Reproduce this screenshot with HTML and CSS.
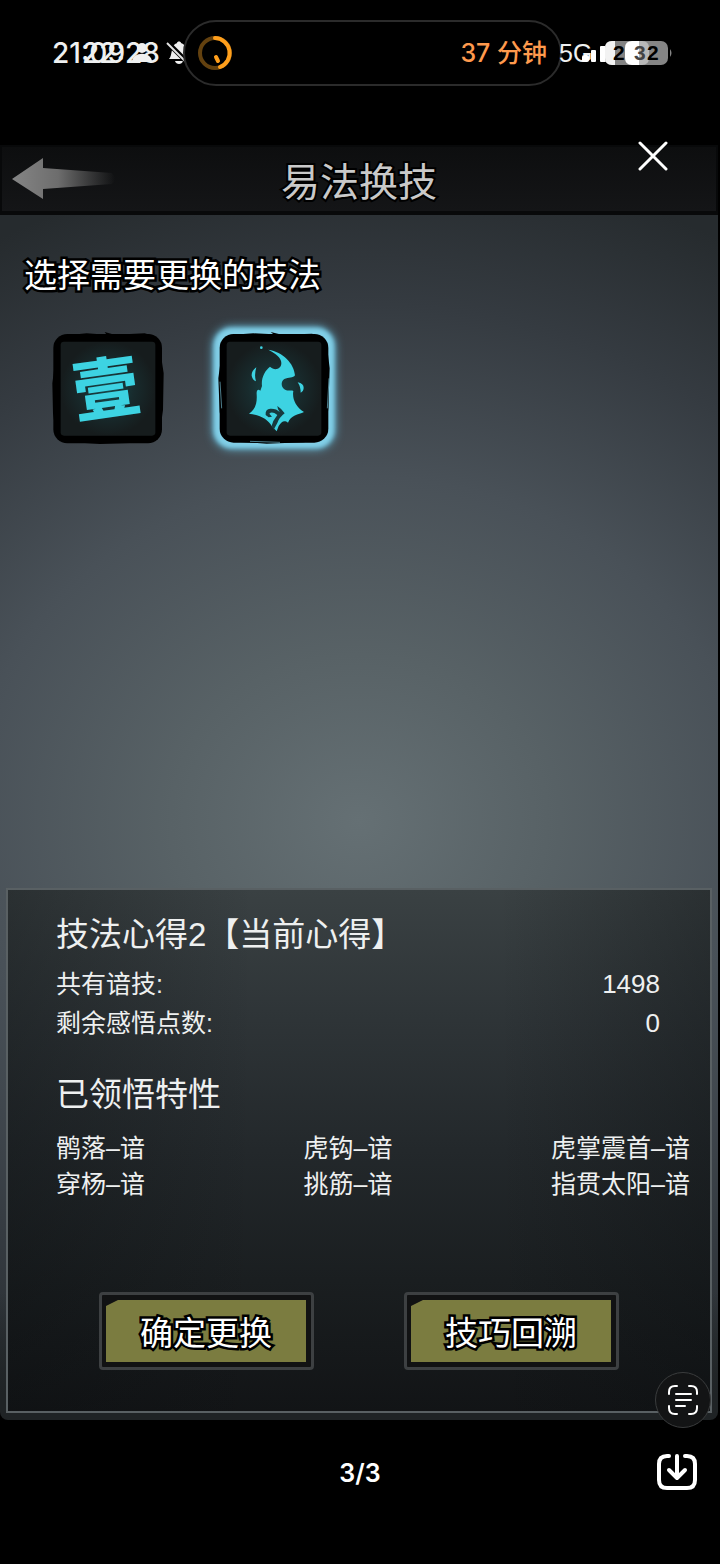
FILE: index.html
```html
<!DOCTYPE html>
<html lang="zh-CN">
<head>
<meta charset="utf-8">
<meta name="viewport" content="width=device-width, initial-scale=1">
<title>易法换技</title>
<link rel="stylesheet" href="styles.css">
</head>
<body>
<header class="status">
  <div class="clocks">
    <div class="clock"><span>21:09</span>
      <svg width="22" height="22" viewBox="0 0 22 22" aria-hidden="true"><circle cx="11" cy="6" r="5"/><path d="M1 20c0-11 20-11 20 0z"/></svg>
    </div>
    <div class="clock clock-over"><span>22:28</span>
      <svg width="22" height="26" viewBox="0 0 22 26" aria-hidden="true"><path d="M3 19c2-2 2-5 3-9 1-5 3-6 5-7 0-2 4-2 4 0 3 1 5 3 5 8 0 4 1 6 2 8z"/><path d="M9 21h8c-1 4-7 4-8 0z"/><path d="M1 2l20 20" stroke="#000" stroke-width="5"/><path d="M1 3l20 20" stroke="#e4e4e4" stroke-width="2"/></svg>
    </div>
  </div>
  <div class="island">
    <svg width="36" height="36" viewBox="0 0 36 36" fill="none" stroke-width="4" aria-hidden="true"><circle cx="18" cy="18" r="15" stroke="#63410f"/><path d="M18 3a15 15 0 0 1 5 29" stroke="#ff9f1c" stroke-linecap="round"/><path d="M19 22l2 4" stroke="#ff9f1c" stroke-width="4" stroke-linecap="round"/></svg>
    <span>37 分钟</span>
  </div>
  <div class="signal">
    <span>5G</span>
    <svg class="battery" width="92" height="26" viewBox="0 0 92 26" aria-hidden="true">
      <rect x="2" y="15" width="7" height="7" rx="2" fill="#fff"/><rect x="11" y="10" width="5" height="12" rx="1" fill="#fff"/><rect x="20" y="6" width="6" height="16" rx="1" fill="#fff"/>
      <rect x="25" y="1" width="44" height="24" rx="7" fill="#828282"/><path d="M35 1h-3q-7 0-7 7v10q0 7 7 7h3z" fill="#f2f2f2"/>
      <rect x="45" y="1" width="43" height="24" rx="7" fill="#858585"/><path d="M58 1h4q7 0 7 7v10q0 7-7 7h-4z" fill="#b8b8b8"/><path d="M59 1h-7q-7 0-7 7v10q0 7 7 7h7z" fill="#fff"/>
      <path d="M90 9q3 4 0 8z" fill="#858585"/>
      <text x="33" y="20">2</text><text x="54" y="20" fill="#444">3</text><text x="67" y="20">2</text>
    </svg>
  </div>
</header>

<main class="screen">
  <div class="titlebar">
    <button class="plain back" aria-label="返回">
      <svg width="106" height="44" viewBox="0 0 106 44"><defs><linearGradient id="fade"><stop offset="0" stop-color="#858585"/><stop offset=".45" stop-color="#6d6d6d"/><stop offset="1" stop-color="#666" stop-opacity="0"/></linearGradient></defs><path d="M0 22L31 1v10l69 5q6 6 0 11l-69 5v10z" fill="url(#fade)"/></svg>
    </button>
    <h1>易法换技</h1>
    <button class="plain close" aria-label="关闭">
      <svg width="30" height="30" viewBox="0 0 30 30" fill="none" stroke="#fff" stroke-width="3" stroke-linecap="round"><path d="M2 2l26 26M28 2L2 28"/></svg>
    </button>
  </div>

  <section class="choose">
    <h2 class="outlined">选择需要更换的技法</h2>
    <div class="skills">
      <button class="plain skill" aria-label="技法心得1">
        <svg width="112" height="112" viewBox="36 36 336 336">
          <defs><radialGradient id="teal"><stop offset="0" stop-color="#17484b"/><stop offset=".55" stop-color="#182b2d"/><stop offset="1" stop-color="#161c1d"/></radialGradient></defs>
          <rect x="40" y="42" width="326" height="328" rx="42"/>
          <path d="M80 46l60-6 60 4-6-8 30 8 90-4 20 6zM362 100l9 60-2 110-7 50zM46 120l-9 70 2 90 7 50zM90 366l90 6 110-4 30-4z"/>
          <rect x="62" y="65" width="284" height="282" rx="10" fill="url(#teal)"/>
          <text class="glyph" text-anchor="middle" x="198" y="280" transform="rotate(-8 198 204)">壹</text>
        </svg>
      </button>
      <button class="plain skill selected" aria-label="技法心得2" aria-pressed="true">
        <svg width="112" height="112" viewBox="54 51 336 336">
          <rect x="59" y="57" width="326" height="326" rx="42"/>
          <path d="M90 60l70-5 60 3-8-7 34 8 90-3 20 6zM383 110l6 50-4 120-5 50zM63 130l-8 60 4 100 6 40zM110 380l90 6 110-4 30-4z"/>
          <path d="M387 190l-5 90M60 200l5 80M150 379l90 3" fill="none" stroke="#72bcd2" stroke-width="2"/>
          <rect x="80" y="80" width="284" height="282" rx="10" fill="url(#teal)"/>
          <g fill="#3dd3e2">
            <path d="M205 104C249 111 282 145 285 181C280 190 265 187 253 192C240 201 244 221 257 225C266 229 274 224 280 228C276 249 286 276 312 291C295 299 272 301 264 323C252 314 245 320 236 333L230 349L215 333C205 313 178 299 147 296C164 283 172 269 170 238C169 225 174 221 181 227L186 213C183 190 194 167 210 155C226 171 249 159 243 138C238 121 218 112 205 104Z"/>
            <path d="M169 157q-15 11-14 25 2 12 13 17-6-18 1-42M293 202q18 4 18 16 0 10-9 15 0-18-9-31"/><circle cx="184" cy="98" r="4"/>
          </g>
          <path d="M197 300q-2-18 14-19 18-1 28 10-7-10-7-18 14 9 22 22-17 13-22 29l-11 20-6-12 5-14 12-18q-16-12-24-4l8 9-10 2z" fill="#173b3f"/>
        </svg>
      </button>
    </div>
  </section>

  <section class="panel">
    <h2>技法心得2【当前心得】</h2>
    <dl class="stats">
      <div><dt>共有谙技:</dt><dd>1498</dd></div>
      <div><dt>剩余感悟点数:</dt><dd>0</dd></div>
    </dl>
    <h2>已领悟特性</h2>
    <ul class="traits">
      <li>鹘落–谙</li><li>虎钩–谙</li><li>虎掌震首–谙</li>
      <li>穿杨–谙</li><li>挑筋–谙</li><li>指贯太阳–谙</li>
    </ul>
    <div class="actions">
      <button class="action"><span class="outlined">确定更换</span></button>
      <button class="action"><span class="outlined">技巧回溯</span></button>
    </div>
  </section>
  <button class="plain scan" aria-label="识别文字">
    <svg width="32" height="32" viewBox="0 0 32 32" fill="none" stroke="#fff" stroke-width="2" stroke-linecap="round"><path d="M2 10V8q0-6 6-6h2M22 2h2q6 0 6 6v2M30 22v2q0 6-6 6h-2M10 30H8q-6 0-6-6v-2M9 10h15M9 16h15M9 22h9"/></svg>
  </button>
</main>

<footer class="viewer">
  <span class="count">3/3</span>
  <button class="plain save" aria-label="保存">
    <svg width="42" height="38" viewBox="0 0 42 38" fill="none" stroke="#fff" stroke-width="4" stroke-linecap="round" stroke-linejoin="round"><path d="M13 3h-2q-8 0-8 8v16q0 8 8 8h20q8 0 8-8V11q0-8-8-8h-2M21 3v21M13 17l8 8 8-8"/></svg>
  </button>
</footer>
</body>
</html>
```
FILE: styles.css
```css
* { box-sizing: border-box; }

body {
  margin: 0;
  min-height: 100vh;
  display: flex;
  flex-direction: column;
  background: #000;
  color: #eef0f0;
  font-family: "Liberation Sans", "Noto Sans CJK SC", sans-serif;
}

h1, h2, dl, dd, ul { margin: 0; padding: 0; font-weight: 400; }

.plain {
  padding: 0;
  border: 0;
  background: none;
  color: inherit;
  cursor: pointer;
}

svg { display: block; }

/* Status bar */
.status {
  height: 145px;
  padding: 20px 50px 0 52px;
  display: flex;
  align-items: flex-start;
}

.clocks, .signal {
  height: 66px;
  display: flex;
  align-items: center;
}

.clocks { width: 131px; position: relative; flex: none; font: 500 28px/32px Inter, sans-serif; }
.clock { display: flex; align-items: center; gap: 6px; fill: #f0f0f0; }
.clock-over { position: absolute; left: 30px; }
.clock svg { flex: none; }

.island {
  flex: 1;
  height: 66px;
  padding: 0 13px 0 12px;
  display: flex;
  align-items: center;
  justify-content: space-between;
  position: relative;
  background: #000;
  border: 2px solid #2b2b2b;
  border-radius: 33px;
  color: #ff9a4d;
  font: 500 25px/32px Inter, "Noto Sans CJK SC", sans-serif;
}

.signal { width: 108px; flex: none; position: relative; font-size: 25px; }
.signal > span { margin-left: -3px; }
.battery { position: absolute; left: 18px; top: 20px; font: 700 21px "Liberation Sans", sans-serif; }

/* Game screen */
.screen {
  flex: 1;
  display: flex;
  flex-direction: column;
  position: relative;
  margin-right: 2px;
  padding-bottom: 7px;
  border-radius: 0 0 8px 8px;
  background:
    linear-gradient(transparent 90%, #1f2325 98%),
    radial-gradient(ellipse 105% 52% at 50% 53%, #657074 0%, #586266 25%, #495158 52%, #353b41 78%, #262b2e 100%);
}

.titlebar {
  height: 70px;
  display: grid;
  grid-template-columns: 1fr auto 1fr;
  align-items: center;
  padding: 0 10px;
  background: linear-gradient(#0d0e0f, #141517);
  border: 2px solid #08090a;
  border-bottom-width: 4px;
}

.titlebar h1 {
  color: #c9c9c9;
  font: 400 39px/56px KaiTi, STKaiti, "Noto Sans CJK SC", serif;
  -webkit-text-stroke: 4px #000;
  paint-order: stroke fill;
}

.back { justify-self: start; }
.close { position: absolute; right: 50px; top: -4px; }

.choose { flex: 1; padding: 37px 24px; }

.outlined {
  color: #fff;
  -webkit-text-stroke: 5px #000;
  paint-order: stroke fill;
}

.choose h2 { font-size: 33px; line-height: 48px; }

.skills { display: flex; gap: 54px; padding: 32px 28px; }
.skill { border-radius: 14px; }
.selected { background: #82cfe7; box-shadow: 0 0 4px 4px #82cfe7, 0 0 10px 5px #62b5d3; }
.glyph { font: 900 200px "Noto Sans CJK SC", sans-serif; fill: #3dd3e2; }

/* Details */
.panel {
  margin: 0 6px;
  padding: 20px 20px 41px 48px;
  border: 2px solid #596063;
  background:
    linear-gradient(90deg, #0b0e1055, transparent 35%, transparent 70%, #0b0e1055),
    linear-gradient(#3a4143, #2e3437 25%, #23282b 50%, #1a1e20 75%, #121416);
}

.panel h2 { font-family: "Liberation Sans", "Noto Sans CJK SC", sans-serif; font-size: 33px; line-height: 50px; }

.stats { margin: 5px 30px 27px 0; font-size: 25px; line-height: 39px; }
.stats div { display: flex; justify-content: space-between; }
.stats dd { font-size: 26px; }

.traits {
  display: grid;
  grid-template-columns: 1fr 1fr auto;
  margin-top: 10px;
  list-style: none;
  font-size: 25px;
  line-height: 36px;
}

.actions { display: flex; gap: 90px; margin: 90px 0 0 43px; }

.action {
  width: 215px;
  height: 78px;
  padding: 4px;
  border: 3px solid #3d4042;
  border-radius: 4px;
  background: #111213;
  cursor: pointer;
}

.action span {
  display: block;
  margin-right: 1px;
  background: #7b7c40;
  clip-path: polygon(0 6px, 12px 0, 100% 0, 100% 100%, 0 100%);
  font: 400 33px/62px "Noto Sans CJK SC", sans-serif;
}

.scan {
  position: absolute;
  right: 7px;
  bottom: -8px;
  width: 56px;
  height: 56px;
  display: grid;
  place-items: center;
  border: 1px solid #3a3c3d;
  border-radius: 50%;
  background: #131415;
}

/* Viewer controls */
.viewer {
  height: 144px;
  padding: 33px 22px 0;
  display: grid;
  grid-template-columns: 1fr auto 1fr;
  align-items: start;
}

.count { grid-column: 2; color: #fff; font: 600 25px/40px Inter, sans-serif; }
.save { justify-self: end; }
```
